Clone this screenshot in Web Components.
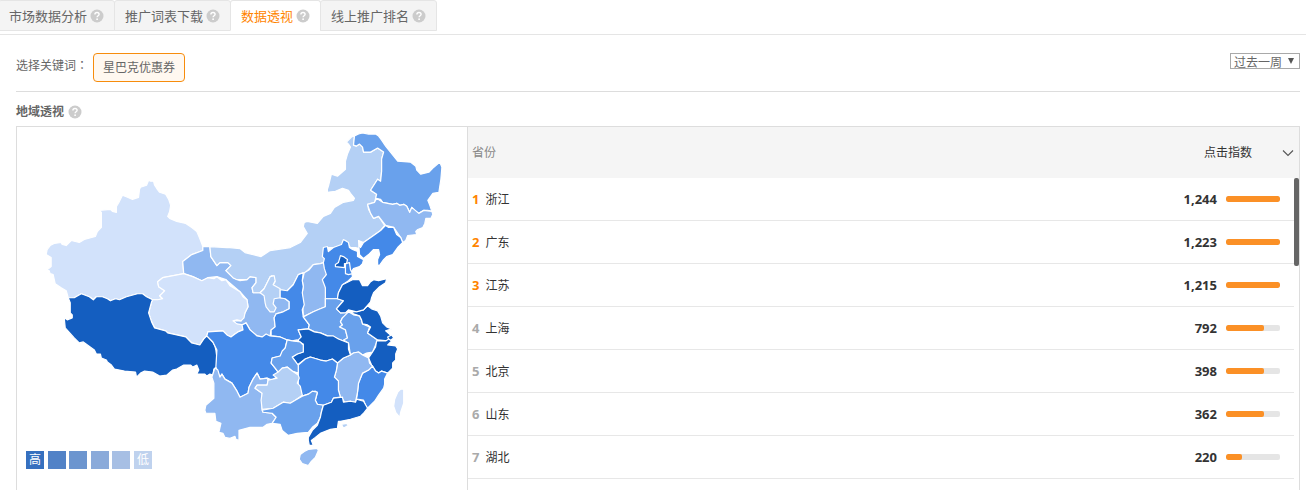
<!DOCTYPE html>
<html lang="zh-CN">
<head>
<meta charset="utf-8">
<title>数据透视</title>
<style>
  html, body {
    margin: 0;
    height: 100%;
  }
  body {
    display: flex;
    flex-direction: column;
    overflow: hidden;
    background: #fff;
    color: #666;
    font: 12px/18px "Noto Sans", "Noto Sans CJK SC", sans-serif;
  }
  .colon {
    font-family: "Noto Sans CJK TC", sans-serif;
  }
  region-panel {
    flex: 1;
    min-height: 0;
  }
</style>
</head>
<body>
  <tab-bar>
    <tab-item>市场数据分析</tab-item>
    <tab-item>推广词表下载</tab-item>
    <tab-item active>数据透视</tab-item>
    <tab-item>线上推广排名</tab-item>
  </tab-bar>
  <keyword-filter>
    <span slot="label">选择关键词<span class="colon" lang="zh-TW">：</span></span>
    <keyword-chip>星巴克优惠券</keyword-chip>
    <period-select slot="period"></period-select>
  </keyword-filter>
  <region-panel>
    <span slot="title">地域透视</span>
    <china-map slot="map"></china-map>
    <rank-table slot="rank"></rank-table>
  </region-panel>

<script>
function makeTemplate(html) {
  const template = document.createElement('template');
  template.innerHTML = html;
  return template;
}

class BaseElement extends HTMLElement {
  constructor() {
    super();
    this.attachShadow({ mode: 'open' });
    this.shadowRoot.appendChild(this.constructor.template.content.cloneNode(true));
  }
}

// help-icon: grey circle with a question mark
class HelpIcon extends BaseElement {
  static template = makeTemplate(`
    <style>
      :host { display: inline-flex; flex: none; }
      svg { display: block; }
    </style>
    <svg width="14" height="14" viewBox="0 0 14 14" aria-hidden="true">
      <circle cx="7" cy="7" r="6.5" fill="#ccc"/>
      <path d="M4.9 5.6C4.9 4.2 5.8 3.5 7 3.5s2.1.7 2.1 1.8c0 1.4-2 1.5-2 3" fill="none" stroke="#fff" stroke-width="1.4"/>
      <circle cx="7.1" cy="10.2" r=".9" fill="#fff"/>
    </svg>
  `);
}
customElements.define('help-icon', HelpIcon);

// tab-bar / tab-item
class TabBar extends BaseElement {
  static template = makeTemplate(`
    <style>
      :host {
        display: block;
        padding-bottom: 3px;
        border-bottom: 1px solid #e5e5e5;
      }
      div { display: flex; }
    </style>
    <div role="tablist"><slot></slot></div>
  `);

  connectedCallback() {
    this.addEventListener('click', (e) => {
      const item = e.target.closest('tab-item');
      if (!item) return;
      this.querySelectorAll('tab-item').forEach(tab => {
        tab.toggleAttribute('active', tab === item);
      });
    });
  }
}
customElements.define('tab-bar', TabBar);

class TabItem extends BaseElement {
  static observedAttributes = ['active'];
  static template = makeTemplate(`
    <style>
      :host {
        display: block;
        margin-left: -1px;
      }
      :host(:first-child) { margin-left: -2px; }
      button {
        display: flex;
        align-items: center;
        gap: 3px;
        height: 31px;
        padding: 0 10px;
        border: 1px solid #e5e5e5;
        border-radius: 3px 3px 0 0;
        background: #f4f4f4;
        color: #666;
        font: inherit;
        font-size: 13px;
        cursor: pointer;
      }
      :host([active]) button {
        border-bottom-color: #fff;
        background: #fff;
        color: #ff8400;
      }
    </style>
    <button type="button" role="tab"><slot></slot><help-icon></help-icon></button>
  `);

  attributeChangedCallback() {
    this.shadowRoot.querySelector('button').setAttribute('aria-selected', this.hasAttribute('active'));
  }
}
customElements.define('tab-item', TabItem);

// keyword-filter: keyword chips on the left, period on the right
class KeywordFilter extends BaseElement {
  static template = makeTemplate(`
    <style>
      :host {
        display: flex;
        align-items: flex-start;
        margin: 0 6px 0 16px;
        padding: 18px 0 9px;
        border-bottom: 1px solid #ddd;
      }
      .label { width: 77px; padding-top: 3px; }
      .chips { display: flex; flex: 1; gap: 8px; }
    </style>
    <div class="label"><slot name="label"></slot></div>
    <div class="chips"><slot></slot></div>
    <slot name="period"></slot>
  `);
}
customElements.define('keyword-filter', KeywordFilter);

class KeywordChip extends BaseElement {
  static template = makeTemplate(`
    <style>
      :host { display: block; }
      button {
        display: block;
        height: 29px;
        padding: 1px 9px 0;
        border: 1px solid #f78c0c;
        border-radius: 4px;
        background: #fff8f0;
        color: #666;
        font: inherit;
        cursor: pointer;
      }
    </style>
    <button type="button"><slot></slot></button>
  `);
}
customElements.define('keyword-chip', KeywordChip);

class PeriodSelect extends BaseElement {
  static template = makeTemplate(`
    <style>
      :host {
        display: grid;
        align-items: center;
      }
      select, svg { grid-area: 1 / 1; }
      select {
        appearance: none;
        height: 16px;
        width: 70px;
        padding: 1px 0 0 3px;
        border: 1px solid #a9a9a9;
        border-radius: 0;
        background: #fff;
        color: #666;
        font: inherit;
        line-height: 16px;
      }
      svg {
        justify-self: end;
        margin-right: 5px;
        pointer-events: none;
      }
    </style>
    <select aria-label="时间">
      <option>过去一周</option>
    </select>
    <svg width="8" height="8" viewBox="0 0 8 8" aria-hidden="true"><path d="M1 1h6L4 7z" fill="#555"/></svg>
  `);
}
customElements.define('period-select', PeriodSelect);

// region-panel: title, then map and ranking side by side
class RegionPanel extends BaseElement {
  static template = makeTemplate(`
    <style>
      :host {
        display: flex;
        flex-direction: column;
        margin: 0 6px 0 16px;
      }
      h2 {
        display: flex;
        align-items: center;
        gap: 4px;
        margin: 0;
        padding: 11px 0 5px;
        font-size: 12px;
        line-height: 18px;
      }
      .body {
        display: grid;
        grid-template-columns: minmax(450px, 35%) 1fr;
        flex: 1;
        min-height: 0;
        border: 1px solid #ddd;
        border-bottom: none;
        overflow: hidden;
      }
    </style>
    <h2><slot name="title"></slot><help-icon></help-icon></h2>
    <div class="body">
      <slot name="map"></slot>
      <slot name="rank"></slot>
    </div>
  `);
}
customElements.define('region-panel', RegionPanel);

// china-map: provinces shaded by level, 0 is the highest
const LEVELS = ['#145ec0', '#4489e8', '#69a1ec', '#90b8f1', '#b4d0f5', '#d2e2fb'];

const PROVINCES = [
  ['xinjiang', 5, '149,181 151,182 154,182 155,186 157,189 160,193 163,194 166,195 169,200 171,206 170,212 168,217 170,219 177,222 186,224 192,228 197,232 200,239 203,247 203,251 192,255 187,259 183,262 184,274 174,276 163,278 158,282 159,287 162,289 165,291 163,294 160,296 163,299 158,300 153,300 147,297 143,294 138,294 127,297 120,300 116,299 111,301 108,299 103,297 97,297 94,300 90,297 82,294 75,298 69,298 67,291 62,288 56,284 54,275 51,274 50,271 47,271 52,267 52,258 47,255 48,250 51,246 55,244 62,243 63,245 67,246 72,241 80,243 85,240 96,237 98,232 102,228 102,213 100,211 111,210 113,212 117,213 117,207 120,202 123,196 128,198 133,200 139,198 140,190 141,188 147,186'],
  ['gansu', 3, '203,247 210,247 211,257 217,266 220,263 228,263 231,266 226,271 233,278 240,281 247,280 250,277 256,278 256,283 252,288 253,293 260,293 273,285 280,290 280,298 285,299 289,302 289,309 283,312 276,314 274,318 275,327 271,330 270,336 262,337 257,336 250,330 246,323 243,330 233,321 241,321 245,313 248,307 247,300 240,292 226,280 217,277 208,278 202,281 193,277 184,274 183,262 192,255 203,251'],
  ['qinghai', 5, '184,274 193,277 202,281 208,278 214,279 217,277 222,281 226,280 230,286 240,292 243,297 247,300 248,307 245,313 244,318 241,321 237,320 233,321 237,324 243,325 243,330 238,332 235,334 231,337 227,335 223,331 208,332 207,336 204,339 200,345 192,343 186,337 168,333 166,331 155,328 152,322 149,313 152,302 153,300 158,300 163,299 160,296 165,291 159,287 158,282 163,278'],
  ['tibet', 0, '69,298 75,298 82,294 90,297 94,300 97,297 103,297 108,299 111,301 116,299 120,300 127,297 138,294 143,294 147,297 153,300 152,302 149,313 152,322 155,328 166,331 168,333 177,335 186,337 192,343 200,345 204,339 207,336 213,342 215,346 216,350 217,358 217,367 214,369 213,375 210,374 207,376 205,374 197,374 199,370 197,365 193,367 191,365 184,365 177,369 173,370 167,375 160,376 153,372 145,371 141,373 137,377 136,372 125,371 115,369 112,365 108,362 107,360 102,358 101,354 97,354 95,350 84,342 80,343 75,338 66,328 65,318 68,320 73,318 73,315 71,313 71,303'],
  ['inner-mongolia', 4, '210,247 227,248 230,248 240,249 245,253 261,257 270,251 290,248 300,243 307,234 303,227 304,223 307,222 317,224 323,217 330,214 334,208 343,203 353,201 354,199 350,194 348,191 342,189 335,192 327,193 327,190 328,187 331,175 337,177 345,170 345,162 347,155 350,148 348,145 346,143 349,140 351,138 354,137 353,146 356,147 359,145 362,148 363,153 370,153 377,149 383,153 381,160 381,172 380,182 377,180 370,191 376,195 374,203 367,205 368,210 373,219 378,217 384,226 380,231 373,236 363,243 358,241 359,249 355,248 350,248 345,241 340,247 333,248 327,248 327,262 320,264 313,265 305,273 298,275 293,285 287,291 280,290 273,288 273,285 275,282 272,276 270,277 267,283 264,289 260,293 253,293 252,288 256,283 256,278 250,277 247,280 237,280 233,278 226,271 231,266 228,263 220,263 217,266 211,257'],
  ['ningxia', 4, '260,293 264,289 267,283 270,277 274,276 275,281 273,285 280,289 280,298 274,299 273,304 276,308 274,312 270,312 266,307 265,303 264,296'],
  ['heilongjiang', 2, '354,137 358,135 362,134 368,135 375,135 378,137 381,141 385,147 397,162 410,163 415,167 416,171 420,175 428,173 433,168 439,163 441,168 440,180 438,193 432,194 427,201 429,206 431,212 427,211 423,211 418,214 414,211 411,208 409,213 406,207 403,205 399,206 396,204 392,205 387,204 382,203 380,200 375,199 376,195 370,191 377,180 380,182 381,172 381,160 383,153 377,149 370,153 363,153 362,148 359,145 356,147 353,146'],
  ['jilin', 3, '367,205 374,203 376,199 382,203 387,204 392,205 396,204 399,206 403,205 406,207 409,213 411,208 418,214 423,211 431,212 432,215 430,219 425,219 424,224 422,228 417,230 415,232 416,235 407,236 405,241 402,243 400,238 393,228 385,226 378,217 373,219 370,214'],
  ['liaoning', 1, '385,226 388,228 393,228 396,235 400,238 402,243 397,248 392,255 386,257 383,260 378,267 377,264 377,260 379,255 378,250 373,250 368,255 363,259 359,255 358,241 360,248 363,243 373,236 380,231'],
  ['shanxi', 3, '327,262 320,264 313,265 309,270 304,273 302,281 303,287 302,293 303,317 313,312 320,309 325,307 325,299 327,294 326,286 323,280 326,275 328,272'],
  ['shaanxi', 1, '303,273 298,275 293,285 287,291 280,290 280,298 285,299 289,302 289,309 283,312 276,314 274,318 275,327 271,330 271,336 280,337 287,340 292,341 297,340 304,343 301,337 298,330 308,329 309,325 303,317 302,310 304,305 302,293 303,287 302,281'],
  ['hebei', 1, '323,248 327,247 328,252 333,248 341,245 343,240 348,243 349,248 352,250 357,252 357,257 363,260 362,264 359,267 353,269 351,272 352,277 348,281 342,285 338,293 337,299 325,299 325,288 322,280 326,275 324,269 323,263 324,259 322,257'],
  ['tianjin', 1, '345,264 349,263 350,270 352,274 348,275 345,274'],
  ['beijing', 0, '335,265 338,263 340,256 343,257 347,260 346,264 344,264 344,268 335,267'],
  ['henan', 2, '303,317 313,312 320,309 325,307 325,299 337,299 343,301 336,309 340,313 348,312 346,315 342,318 340,322 342,325 340,327 343,328 345,330 347,338 343,341 338,339 333,337 327,336 320,333 314,332 308,329 309,325'],
  ['anhui', 2, '348,312 353,315 359,316 361,320 362,324 369,327 367,333 377,340 375,345 372,352 366,353 362,355 358,352 353,353 350,355 348,343 343,340 347,338 345,330 339,327 342,325 340,322 342,318'],
  ['jiangsu', 0, '348,311 353,312 363,310 367,306 371,309 377,311 380,316 382,323 386,327 391,329 385,331 391,336 387,341 377,340 367,333 370,327 367,325 362,324 361,320 359,316 353,314'],
  ['shandong', 0, '352,280 359,280 362,286 367,286 370,282 373,280 378,281 386,279 385,283 379,287 373,293 371,298 370,302 363,310 356,312 348,310 345,313 340,313 336,309 343,301 337,299 338,293 342,285'],
  ['shanghai', 0, '387,337 391,335 393,338 389,341'],
  ['zhejiang', 0, '376,341 385,341 388,339 391,341 387,345 395,346 397,349 395,354 395,360 392,363 392,368 387,373 381,371 378,373 375,371 371,365 368,358 372,352 375,347'],
  ['fujian', 1, '372,366 375,371 378,373 381,371 387,373 384,379 384,384 383,388 378,395 374,401 367,408 365,405 363,400 356,399 357,392 358,383 362,373 368,370'],
  ['jiangxi', 3, '350,355 353,353 358,352 362,355 368,358 369,363 372,366 368,370 362,373 358,383 357,392 355,402 350,401 345,403 343,400 340,397 338,390 338,381 334,377 336,370 337,363 343,358'],
  ['hubei', 0, '298,330 308,329 314,332 320,333 327,336 333,336 338,339 343,341 348,343 348,349 350,355 343,358 337,363 332,359 326,361 320,360 310,357 305,359 297,365 295,361 292,357 297,354 303,352 303,344 299,342 298,340 301,337'],
  ['hunan', 1, '298,365 305,359 310,357 320,360 326,361 332,359 337,363 336,370 334,377 338,381 338,390 340,397 333,398 331,402 323,405 317,404 315,400 317,393 315,391 312,392 308,394 302,396 298,385 298,375'],
  ['sichuan', 1, '207,336 208,332 223,331 227,335 231,337 235,334 238,332 243,330 242,325 246,323 250,330 257,336 262,337 266,334 270,336 280,337 287,340 285,348 280,356 272,358 271,363 275,368 278,372 276,377 272,380 267,378 260,379 257,373 253,379 249,387 248,393 240,397 237,391 232,383 225,379 222,374 220,377 216,367 217,350 213,342'],
  ['chongqing', 2, '287,340 292,341 300,342 303,345 303,352 297,354 292,357 295,361 298,365 298,373 292,371 287,367 282,368 278,372 275,368 271,363 272,358 280,356 282,351 285,348'],
  ['yunnan', 3, '215,368 218,370 220,377 222,374 225,379 232,383 237,391 240,397 248,393 249,387 253,379 257,373 260,379 267,378 268,380 267,385 257,385 255,388 262,393 262,409 263,412 272,413 276,417 272,423 267,424 263,427 255,427 250,427 239,430 239,440 236,439 235,436 230,438 225,437 223,433 219,432 221,423 216,421 215,413 206,413 205,410 206,405 214,398 214,383 212,377'],
  ['guizhou', 4, '277,378 273,375 278,372 282,368 287,367 292,371 298,375 299,378 297,383 300,386 302,395 295,400 290,403 283,402 273,408 262,409 261,400 262,393 255,388 257,385 267,385 268,380'],
  ['guangxi', 2, '262,410 273,408 283,402 290,403 295,400 302,396 308,394 312,391 317,392 315,400 317,404 323,405 321,412 320,417 317,423 312,427 308,432 297,433 288,435 282,430 280,424 272,423 276,417 272,413 263,412'],
  ['guangdong', 0, '323,405 331,402 333,398 342,397 343,402 350,401 355,402 356,399 363,401 367,408 363,413 360,416 350,419 340,421 338,421 337,428 330,429 325,431 320,433 315,437 311,440 313,445 309,445 308,440 308,437 312,430 317,425 320,417 321,412'],
  ['hongkong', 4, '341,424 346,423 348,425 343,428'],
  ['hainan', 3, '300,454 304,451 308,449 317,448 318,450 315,457 311,461 308,465 302,463 299,459'],
  ['taiwan', 5, '397,392 400,389 403,389 403,403 400,412 399,417 395,412 393,406 394,399']
];

class ChinaMap extends BaseElement {
  static template = makeTemplate(`
    <style>
      :host {
        display: block;
        position: relative;
        align-self: start;
        min-width: 0;
      }
      svg {
        display: block;
        width: 100%;
      }
      polygon {
        stroke: #fff;
        stroke-width: 1.2;
        stroke-linejoin: round;
      }
      .legend {
        position: absolute;
        left: 9px;
        bottom: 21px;
        display: flex;
        justify-content: space-between;
        width: 126px;
        color: #fff;
        text-align: center;
      }
      .legend span {
        width: 18px;
        height: 18px;
        line-height: 18px;
      }
      .legend span:nth-child(1) { background: #3670bf; }
      .legend span:nth-child(2) { background: #5182c7; }
      .legend span:nth-child(3) { background: #6c95cf; }
      .legend span:nth-child(4) { background: #8aaada; }
      .legend span:nth-child(5) { background: #a7bfe4; }
      .legend span:nth-child(6) { background: #bfd2ee; }
    </style>
    <svg viewBox="18 128 448 361" aria-hidden="true"></svg>
    <div class="legend"><span>高</span><span></span><span></span><span></span><span></span><span>低</span></div>
  `);

  connectedCallback() {
    const svg = this.shadowRoot.querySelector('svg');
    svg.innerHTML = PROVINCES.map(([id, level, points]) =>
      `<polygon id="${id}" fill="${LEVELS[level]}" points="${points}"/>`
    ).join('');
  }
}
customElements.define('china-map', ChinaMap);

// rank-table: provinces by click index
const RANKS = [
  { name: '浙江', value: '1,244', percent: 100 },
  { name: '广东', value: '1,223', percent: 100 },
  { name: '江苏', value: '1,215', percent: 100 },
  { name: '上海', value: '792', percent: 70 },
  { name: '北京', value: '398', percent: 70 },
  { name: '山东', value: '362', percent: 70 },
  { name: '湖北', value: '220', percent: 30 }
];

class RankTable extends BaseElement {
  static template = makeTemplate(`
    <style>
      :host {
        display: block;
        position: relative;
        border-left: 1px solid #ddd;
        color: #333;
      }
      table, thead, tbody { display: block; }
      tr {
        display: flex;
        align-items: center;
        justify-content: space-between;
      }
      th, td { padding: 0; font-weight: normal; }
      thead tr {
        height: 51px;
        padding: 0 5px 0 4px;
        background: #f5f5f5;
      }
      thead th:first-child { color: #888; }
      thead button {
        display: flex;
        align-items: center;
        gap: 30px;
        padding: 0;
        border: none;
        background: none;
        color: inherit;
        font: inherit;
        cursor: pointer;
      }
      tbody { margin-right: 5px; }
      tbody tr {
        height: 42px;
        padding: 0 14px 0 4px;
        border-bottom: 1px solid #e7e7e7;
      }
      td { display: flex; align-items: center; }
      td:first-child { align-items: baseline; gap: 6px; }
      td:last-child { gap: 9px; }
      b { font-size: 13px; }
      .rank { color: #aaa; }
      tr:nth-child(-n+3) .rank { color: #ff8400; }
      .bar {
        width: 54px;
        height: 6px;
        border-radius: 2px;
        background: #e5e5e5;
        overflow: hidden;
      }
      .fill {
        height: 100%;
        border-radius: 2px;
        background: #fb9026;
      }
      .thumb {
        position: absolute;
        top: 51px;
        right: 0;
        width: 5px;
        height: 88px;
        border-radius: 2px;
        background: #666;
      }
    </style>
    <table>
      <thead>
        <tr>
          <th>省份</th>
          <th>
            <button type="button">点击指数
              <svg width="12" height="8" viewBox="0 0 12 8" aria-hidden="true"><path d="M1 1.5l5 5 5-5" fill="none" stroke="#555" stroke-width="1.1"/></svg>
            </button>
          </th>
        </tr>
      </thead>
      <tbody></tbody>
    </table>
    <div class="thumb"></div>
  `);

  connectedCallback() {
    this.shadowRoot.querySelector('tbody').innerHTML = RANKS.map((row, i) => `
      <tr>
        <td><b class="rank">${i + 1}</b><span>${row.name}</span></td>
        <td><b>${row.value}</b><div class="bar"><div class="fill" style="width: ${row.percent}%"></div></div></td>
      </tr>
    `).join('');
  }
}
customElements.define('rank-table', RankTable);
</script>
</body>
</html>
